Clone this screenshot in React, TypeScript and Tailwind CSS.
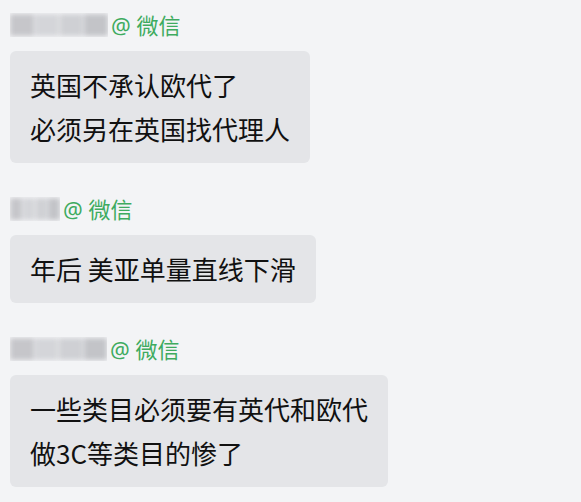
import React from 'react';

interface Message {
  nameWidth: number;
  lines: string[];
}

const messages: Message[] = [
  { nameWidth: 98, lines: ['英国不承认欧代了', '必须另在英国找代理人'] },
  { nameWidth: 50, lines: ['年后 美亚单量直线下滑'] },
  { nameWidth: 97, lines: ['一些类目必须要有英代和欧代', '做3C等类目的惨了'] },
];

function BlurredName({ width }: { width: number }) {
  return (
    <div className="relative h-[24px] overflow-hidden" style={{ width }}>
      <div className="absolute inset-x-0 top-[1px] bottom-[1px] flex gap-[1px] blur-[2.5px]">
        <div className="flex-1 bg-[#c6c6ca]" />
        <div className="flex-1 bg-[#d4d5d9]" />
        <div className="flex-1 bg-[#cfd0d4]" />
        <div className="flex-1 bg-[#c3c4c8]" />
      </div>
    </div>
  );
}

function ChatMessage({ message }: { message: Message }) {
  return (
    <div className="flex flex-col items-start gap-[14px]">
      <div className="flex items-center h-[24px] gap-[3px]">
        <BlurredName width={message.nameWidth} />
        <span
          className="text-[22px] leading-[24px] text-[#3eab5f] whitespace-pre"
          style={{ fontFamily: '"Noto Sans", "Noto Sans CJK SC", sans-serif' }}
        >
          @ 微信
        </span>
      </div>
      <div className="rounded-[6px] bg-[#e4e5e8] pl-[20px] pr-[20px] py-[12px]">
        {message.lines.map((line) => (
          <p key={line} className="text-[26px] leading-[44px] text-[#111111] whitespace-pre">
            {line}
          </p>
        ))}
      </div>
    </div>
  );
}

export default function App() {
  return (
    <div
      className="w-[581px] h-[502px] overflow-hidden bg-[#f3f4f6] pl-[10px] pt-[13px] flex flex-col gap-[34px]"
      style={{ fontFamily: '"Noto Sans CJK SC", "Noto Sans", sans-serif' }}
    >
      {messages.map((m, i) => (
        <ChatMessage key={i} message={m} />
      ))}
    </div>
  );
}
